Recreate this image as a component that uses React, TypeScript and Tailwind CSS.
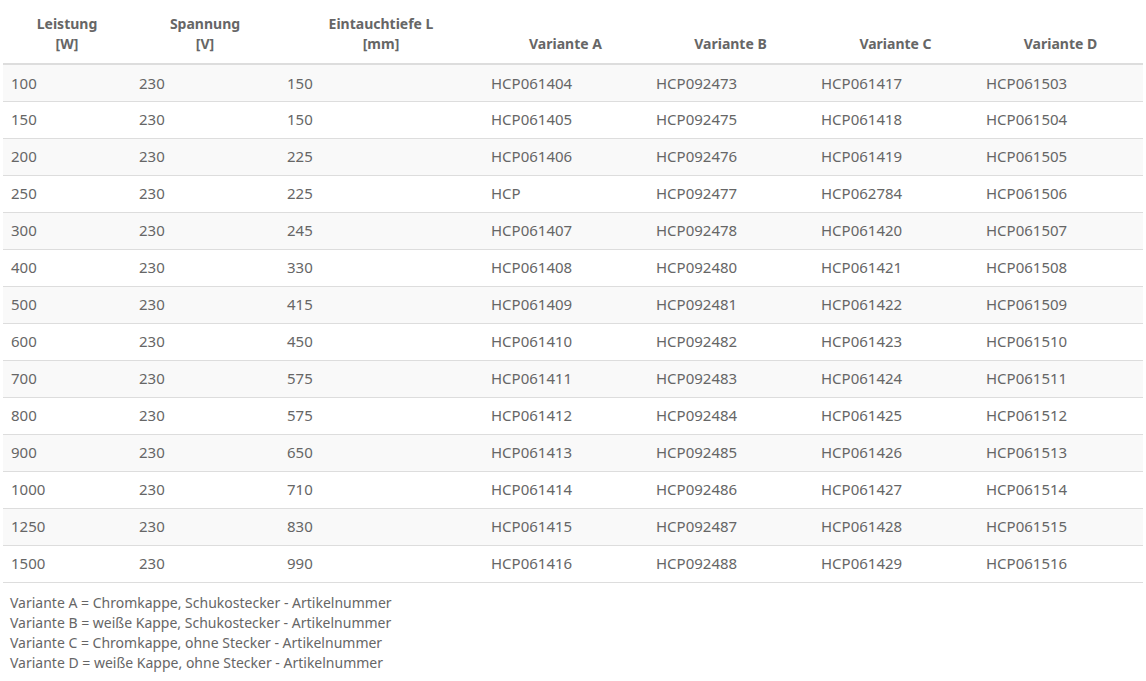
const rows = [
  ["100", "230", "150", "HCP061404", "HCP092473", "HCP061417", "HCP061503"],
  ["150", "230", "150", "HCP061405", "HCP092475", "HCP061418", "HCP061504"],
  ["200", "230", "225", "HCP061406", "HCP092476", "HCP061419", "HCP061505"],
  ["250", "230", "225", "HCP", "HCP092477", "HCP062784", "HCP061506"],
  ["300", "230", "245", "HCP061407", "HCP092478", "HCP061420", "HCP061507"],
  ["400", "230", "330", "HCP061408", "HCP092480", "HCP061421", "HCP061508"],
  ["500", "230", "415", "HCP061409", "HCP092481", "HCP061422", "HCP061509"],
  ["600", "230", "450", "HCP061410", "HCP092482", "HCP061423", "HCP061510"],
  ["700", "230", "575", "HCP061411", "HCP092483", "HCP061424", "HCP061511"],
  ["800", "230", "575", "HCP061412", "HCP092484", "HCP061425", "HCP061512"],
  ["900", "230", "650", "HCP061413", "HCP092485", "HCP061426", "HCP061513"],
  ["1000", "230", "710", "HCP061414", "HCP092486", "HCP061427", "HCP061514"],
  ["1250", "230", "830", "HCP061415", "HCP092487", "HCP061428", "HCP061515"],
  ["1500", "230", "990", "HCP061416", "HCP092488", "HCP061429", "HCP061516"],
];

const headers: [string, string?][] = [
  ["Leistung", "[W]"],
  ["Spannung", "[V]"],
  ["Eintauchtiefe L", "[mm]"],
  ["Variante A"],
  ["Variante B"],
  ["Variante C"],
  ["Variante D"],
];

const widths = ["w-[128px]", "w-[148px]", "w-[204px]", "w-[165px]", "w-[165px]", "w-[165px]", "w-[165px]"];

export default function App() {
  return (
    <div className="min-h-screen bg-white px-[3px] text-[#666] [font-family:Lato,'Liberation_Sans',sans-serif]">
      <table className="w-[1140px] border-collapse table-fixed">
        <thead>
          <tr className="border-b-2 border-[#ddd]">
            {headers.map(([a, b], i) => (
              <th key={a} className={`${widths[i]} h-[64px] align-bottom pb-[9px] text-center text-[14px] font-bold leading-[20px] text-[#666]`}>
                {a}
                {b && <br />}
                {b}
              </th>
            ))}
          </tr>
        </thead>
        <tbody>
          {rows.map((r, i) => (
            <tr key={i} className={`h-[37px] border-b border-[#ddd] ${i % 2 === 0 ? "bg-[#f9f9f9]" : "bg-white"}`}>
              {r.map((c, j) => (
                <td key={j} className="px-2 text-[15px] align-middle">
                  {c}
                </td>
              ))}
            </tr>
          ))}
        </tbody>
      </table>
      <div className="pt-[10px] pl-[7px] text-[14px] leading-[20px]">
        <div>Variante A = Chromkappe, Schukostecker - Artikelnummer</div>
        <div>Variante B = weiße Kappe, Schukostecker - Artikelnummer</div>
        <div>Variante C = Chromkappe, ohne Stecker - Artikelnummer</div>
        <div>Variante D = weiße Kappe, ohne Stecker - Artikelnummer</div>
      </div>
    </div>
  );
}
